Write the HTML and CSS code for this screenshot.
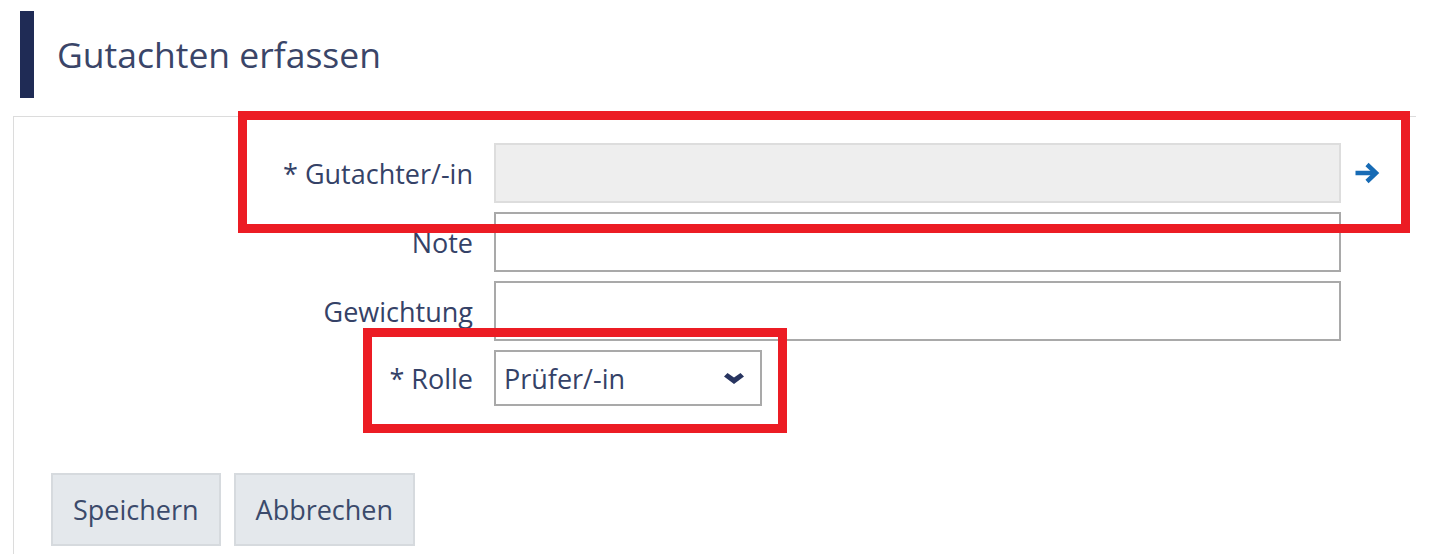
FILE: index.html
```html
<!DOCTYPE html>
<html lang="de">
<head>
    <meta charset="UTF-8">
    <meta name="viewport" content="width=device-width, initial-scale=1.0">
    <title>Gutachten erfassen</title>
    <link rel="stylesheet" href="styles.css">
</head>
<body>
    <div class="page">
        <h1 class="page-title">Gutachten erfassen</h1>

        <div class="panel">
            <div class="form-grid">
                <label class="field-label" for="gutachter">* Gutachter/-in</label>
                <input class="field-input is-readonly" id="gutachter" type="text" readonly>
                <span class="field-action">
                    <svg width="26" height="24" viewBox="0 0 26 24" aria-hidden="true">
                        <path d="M1.5 12 H21" stroke="#176bb5" stroke-width="4.5" fill="none"/>
                        <path d="M13 3.5 L22 12 L13 20.5" stroke="#176bb5" stroke-width="4.5" fill="none" stroke-linejoin="miter"/>
                    </svg>
                </span>

                <label class="field-label" for="note">Note</label>
                <input class="field-input" id="note" type="text">
                <span></span>

                <label class="field-label" for="gewichtung">Gewichtung</label>
                <input class="field-input" id="gewichtung" type="text">
                <span></span>

                <label class="field-label" for="rolle">* Rolle</label>
                <div class="select" id="rolle">
                    <span>Prüfer/-in</span>
                    <svg width="20" height="11" viewBox="0 0 20 11" aria-hidden="true">
                        <polygon points="0,3.5 3.5,0 10,4.5 16.5,0 20,3.5 10,11" fill="#283560"/>
                    </svg>
                </div>
                <span></span>
            </div>

            <div class="actions">
                <button class="btn" type="button">Speichern</button>
                <button class="btn" type="button">Abbrechen</button>
            </div>
        </div>

        <!-- annotation marks -->
        <div class="mark mark-gutachter"></div>
        <div class="mark mark-rolle"></div>
    </div>
</body>
</html>
```

FILE: styles.css
```css
/* Global styles */
body {
    margin: 0;
    padding: 0;
    background-color: #ffffff;
    font-family: 'Open Sans', 'Noto Sans', sans-serif;
    color: #354267;
    overflow: hidden;
}

.page {
    position: relative;
    height: 554px;
    padding-top: 11px;
    box-sizing: border-box;
}

/* Header */
.page-title {
    margin: 0 0 18px 20px;
    height: 87px;
    line-height: 87px;
    border-left: 14px solid #1f2b55;
    padding-left: 23px;
    font-size: 35.5px;
    font-weight: 400;
    color: #3a4568;
}

/* Panel */
.panel {
    margin-left: 13px;
    width: 1403px;
    height: 438px;
    border-top: 1px solid #dcdcdc;
    border-left: 1px solid #dcdcdc;
    padding-top: 26px;
    box-sizing: border-box;
}

.form-grid {
    display: grid;
    grid-template-columns: 480px 847px 40px;
    row-gap: 9px;
    align-items: center;
}

.field-label {
    font-size: 27px;
    text-align: right;
    padding-right: 21px;
    color: #354267;
}

.field-input {
    height: 60px;
    box-sizing: border-box;
    border: 2px solid #a9a9a9;
    background-color: #ffffff;
    font: inherit;
    outline: none;
}

.field-input.is-readonly {
    border-color: #dddddd;
    background-color: #eeeeee;
}

.field-action {
    padding-left: 13px;
    display: flex;
    align-items: center;
}

/* Select */
.select {
    width: 268px;
    height: 56px;
    box-sizing: border-box;
    border: 2px solid #a9a9a9;
    display: flex;
    align-items: center;
    justify-content: space-between;
    padding: 0 16px 0 8px;
    font-size: 27px;
    color: #354267;
}

/* Buttons */
.actions {
    display: flex;
    gap: 13px;
    margin-top: 67px;
    padding-left: 37px;
}

.btn {
    height: 73px;
    padding: 0 20px;
    font-family: inherit;
    font-size: 27px;
    color: #3b4a6b;
    background-color: #e4e8ec;
    border: 2px solid #d6dade;
    border-radius: 0;
}

/* Red annotation marks */
.mark {
    position: absolute;
    border: 9px solid #ec1c24;
    box-sizing: border-box;
}

.mark-gutachter {
    left: 238px;
    top: 111px;
    width: 1172px;
    height: 122px;
}

.mark-rolle {
    left: 363px;
    top: 328px;
    width: 424px;
    height: 105px;
}
```
